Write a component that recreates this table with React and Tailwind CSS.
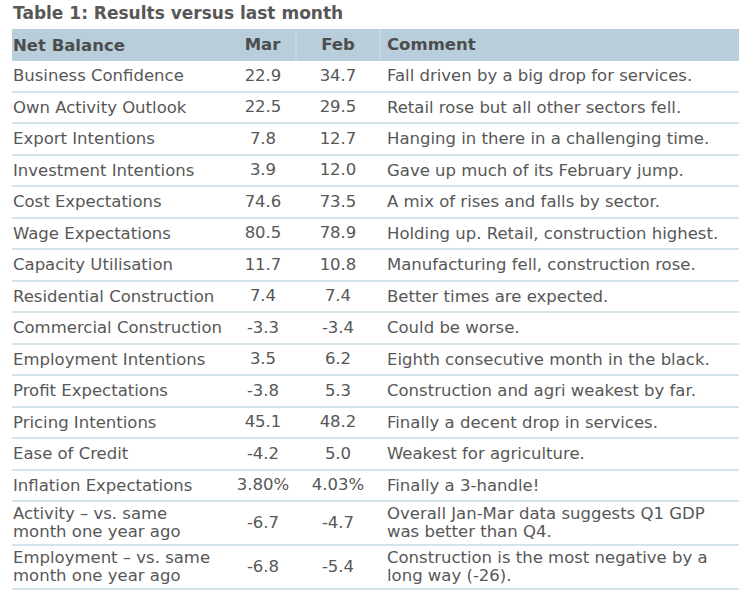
import React from "react";

const rows = [
  ["Business Confidence", "22.9", "34.7", "Fall driven by a big drop for services."],
  ["Own Activity Outlook", "22.5", "29.5", "Retail rose but all other sectors fell."],
  ["Export Intentions", "7.8", "12.7", "Hanging in there in a challenging time."],
  ["Investment Intentions", "3.9", "12.0", "Gave up much of its February jump."],
  ["Cost Expectations", "74.6", "73.5", "A mix of rises and falls by sector."],
  ["Wage Expectations", "80.5", "78.9", "Holding up. Retail, construction highest."],
  ["Capacity Utilisation", "11.7", "10.8", "Manufacturing fell, construction rose."],
  ["Residential Construction", "7.4", "7.4", "Better times are expected."],
  ["Commercial Construction", "-3.3", "-3.4", "Could be worse."],
  ["Employment Intentions", "3.5", "6.2", "Eighth consecutive month in the black."],
  ["Profit Expectations", "-3.8", "5.3", "Construction and agri weakest by far."],
  ["Pricing Intentions", "45.1", "48.2", "Finally a decent drop in services."],
  ["Ease of Credit", "-4.2", "5.0", "Weakest for agriculture."],
  ["Inflation Expectations", "3.80%", "4.03%", "Finally a 3-handle!"],
  ["Activity \u2013 vs. same month one year ago", "-6.7", "-4.7", "Overall Jan-Mar data suggests Q1 GDP was better than Q4."],
  ["Employment \u2013 vs. same month one year ago", "-6.8", "-5.4", "Construction is the most negative by a long way (-26)."],
];

export default function App() {
  return (
    <div
      className="w-[753px] h-[600px] bg-white text-[#575757] pl-[12px] pt-[3px]"
      style={{ fontFamily: '"DejaVu Sans", Verdana, sans-serif' }}
    >
      <h1 className="text-[17px] leading-[20px] font-bold text-[#575757] pl-[1px] mb-[6px]">
        Table 1: Results versus last month
      </h1>
      <table className="table-fixed border-collapse w-[727px] text-[16.5px]">
        <colgroup>
          <col className="w-[216px]" />
          <col className="w-[68px]" />
          <col className="w-[84px]" />
          <col className="w-[359px]" />
        </colgroup>
        <thead>
          <tr className="bg-[#b8cedb] text-[#4d4d4d] font-bold">
            <th className="text-left pl-[1px] h-[32px] leading-[19px] align-middle">Net Balance</th>
            <th className="text-center pl-[2px] h-[32px] align-middle">Mar</th>
            <th className="text-center border-l-2 border-[#c4d7e3] h-[32px] align-middle">Feb</th>
            <th className="text-left pl-[6px] border-l-2 border-[#c4d7e3] h-[32px] align-middle">Comment</th>
          </tr>
        </thead>
        <tbody>
          {rows.map((r, i) => {
            const pad = i >= 14 ? "pt-[3px] pb-[3px]" : "pt-[6px] pb-[5.5px]";
            return (
              <tr key={i} className="border-b-2 border-[#d5e3ec]">
                <td className={"pl-[1px] pr-[6px] leading-[18px] align-middle " + pad}>{r[0]}</td>
                <td className="text-center pl-[2px] leading-[18px] align-middle">{r[1]}</td>
                <td className="text-center leading-[18px] align-middle">{r[2]}</td>
                <td className={"pl-[7px] pr-[4px] leading-[18px] align-middle " + pad}>{r[3]}</td>
              </tr>
            );
          })}
        </tbody>
      </table>
    </div>
  );
}
